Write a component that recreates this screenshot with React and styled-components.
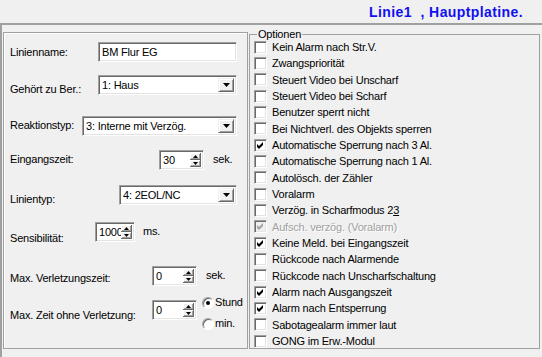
import styled, { createGlobalStyle } from "styled-components";

const GlobalStyle = createGlobalStyle`
  body {
    margin: 0;
    background: #f0f0f0;
  }
`;

const options = [
  { label: "Kein Alarm nach Str.V." },
  { label: "Zwangspriorität" },
  { label: "Steuert Video bei Unscharf" },
  { label: "Steuert Video bei Scharf" },
  { label: "Benutzer sperrt nicht" },
  { label: "Bei Nichtverl. des Objekts sperren" },
  { label: "Automatische Sperrung nach 3 Al.", checked: true },
  { label: "Automatische Sperrung nach 1 Al." },
  { label: "Autolösch. der Zähler" },
  { label: "Voralarm" },
  {
    label: (
      <>
        Verzög. in Scharfmodus 2<u>3</u>
      </>
    ),
  },
  { label: "Aufsch. verzög. (Voralarm)", checked: true, disabled: true },
  { label: "Keine Meld. bei Eingangszeit", checked: true },
  { label: "Rückcode nach Alarmende" },
  { label: "Rückcode nach Unscharfschaltung" },
  { label: "Alarm nach Ausgangszeit", checked: true },
  { label: "Alarm nach Entsperrung", checked: true },
  { label: "Sabotagealarm immer laut" },
  { label: "GONG im Erw.-Modul" },
];

const Check = ({ color }) => (
  <svg width="7" height="7" viewBox="0 0 7 7">
    <path d="M0 2 L2 4 L6 0 L6 3 L2 7 L0 5 Z" fill={color} />
  </svg>
);

const DownArrow = () => (
  <svg width="7" height="4" viewBox="0 0 7 4">
    <path d="M0 0 H7 L3.5 4 Z" fill="#000" />
  </svg>
);

const SmallArrow = ({ up }) => (
  <svg width="5" height="3" viewBox="0 0 5 3">
    <path d={up ? "M0 3 H5 L2.5 0 Z" : "M0 0 H5 L2.5 3 Z"} fill="#000" />
  </svg>
);

const Select = ({ value, width }) => (
  <Field $w={width} $h={20}>
    <Value>{value}</Value>
    <DropButton>
      <DownArrow />
    </DropButton>
  </Field>
);

const Spin = ({ value, width }) => (
  <Field $w={width} $h={20}>
    <Value>{value}</Value>
    <SpinButtons>
      <SpinHalf>
        <SmallArrow up />
      </SpinHalf>
      <SpinHalf>
        <SmallArrow />
      </SpinHalf>
    </SpinButtons>
  </Field>
);

const App = () => {
  return (
    <Window>
      <GlobalStyle />
      <Header>
        <Title>Linie1  , Hauptplatine.</Title>
      </Header>
      <Frame>
        <LeftPanel>
          <Row $mt={9}>
            <Label $w={88} $dy={4}>Linienname:</Label>
            <Field $w={139} $h={20}>
              <Value>BM Flur EG</Value>
            </Field>
          </Row>
          <Row $mt={13}>
            <Label $w={88} $dy={8}>Gehört zu Ber.:</Label>
            <Select value="1: Haus" width={139} />
          </Row>
          <Row $mt={20}>
            <Label $w={72} $dy={3}>Reaktionstyp:</Label>
            <Select value="3: Interne mit Verzög." width={155} />
          </Row>
          <Row $mt={14}>
            <Label $w={149} $dy={3}>Eingangszeit:</Label>
            <Spin value="30" width={45} />
            <Unit $gap={9}>sek.</Unit>
          </Row>
          <Row $mt={15}>
            <Label $w={109} $dy={8}>Linientyp:</Label>
            <Select value="4: 2EOL/NC" width={118} />
          </Row>
          <Row $mt={16}>
            <Label $w={85} $dy={10}>Sensibilität:</Label>
            <Spin value="1000" width={40} />
            <Unit $gap={8}>ms.</Unit>
          </Row>
          <Row $mt={21}>
            <Label $w={142} $dy={6}>Max. Verletzungszeit:</Label>
            <Spin value="0" width={45} />
            <Unit $gap={9}>sek.</Unit>
          </Row>
          <Row $mt={14}>
            <Label $w={142} $dy={9}>Max. Zeit ohne Verletzung:</Label>
            <Spin value="0" width={45} />
            <RadioGroup>
              <RadioRow>
                <Radio $on />
                <span>Stund</span>
              </RadioRow>
              <RadioRow>
                <Radio />
                <span>min.</span>
              </RadioRow>
            </RadioGroup>
          </Row>
        </LeftPanel>
        <Options>
          <Legend>Optionen</Legend>
          <CheckList>
            {options.map((o, i) => (
              <CheckRow key={i} $disabled={o.disabled}>
                <Box $disabled={o.disabled}>
                  {o.checked && <Check color={o.disabled ? "#a0a0a0" : "#000"} />}
                </Box>
                <span>{o.label}</span>
              </CheckRow>
            ))}
          </CheckList>
        </Options>
      </Frame>
    </Window>
  );
};

const Window = styled.div`
  width: 542px;
  height: 357px;
  overflow: hidden;
  background: #f0f0f0;
  font-family: "Liberation Sans", Arial, sans-serif;
  font-size: 11px;
  letter-spacing: -0.2px;
  color: #000;
`;

const Header = styled.div`
  height: 23px;
  display: flex;
  justify-content: flex-end;
  align-items: center;
  padding-right: 19px;
  box-sizing: border-box;
`;

const Title = styled.div`
  font-weight: bold;
  font-size: 14px;
  letter-spacing: 0.4px;
  color: #1010f0;
  white-space: pre;
`;

const Frame = styled.div`
  display: flex;
  align-items: flex-start;
  gap: 1px;
  height: 334px;
  box-sizing: border-box;
  border-top: 2px solid #a0a0a0;
  border-left: 2px solid #a0a0a0;
  padding: 7px 2px 0 1px;
`;

const LeftPanel = styled.div`
  width: 245px;
  height: 317px;
  box-sizing: border-box;
  border: 1px solid #a0a0a0;
  box-shadow: inset 1px 1px #fff;
  padding-left: 6px;
  overflow: hidden;
  display: flex;
  flex-direction: column;
`;

const Row = styled.div`
  display: flex;
  align-items: flex-start;
  margin-top: ${(p) => p.$mt}px;
  line-height: 13px;
  flex-shrink: 0;
`;

const Label = styled.div`
  width: ${(p) => p.$w}px;
  flex-shrink: 0;
  padding-top: ${(p) => p.$dy}px;
  white-space: nowrap;
`;

const Field = styled.div`
  width: ${(p) => p.$w}px;
  height: ${(p) => p.$h}px;
  flex-shrink: 0;
  box-sizing: border-box;
  display: flex;
  align-items: stretch;
  background: #fff;
  border-top: 1px solid #a0a0a0;
  border-left: 1px solid #a0a0a0;
  border-right: 1px solid #fff;
  border-bottom: 1px solid #fff;
  box-shadow: inset 1px 1px #696969, inset -1px -1px #e3e3e3;
  padding: 2px;
`;

const Value = styled.div`
  flex: 1;
  min-width: 0;
  overflow: hidden;
  white-space: nowrap;
  padding-left: 1px;
  line-height: 14px;
`;

const DropButton = styled.div`
  width: 16px;
  flex-shrink: 0;
  box-sizing: border-box;
  display: flex;
  align-items: center;
  justify-content: center;
  background: #f0f0f0;
  border-top: 1px solid #f0f0f0;
  border-left: 1px solid #f0f0f0;
  border-right: 1px solid #696969;
  border-bottom: 1px solid #696969;
  box-shadow: inset 1px 1px #fff, inset -1px -1px #a0a0a0;
`;

const SpinButtons = styled.div`
  width: 11px;
  flex-shrink: 0;
  display: flex;
  flex-direction: column;
`;

const SpinHalf = styled.div`
  flex: 1;
  box-sizing: border-box;
  display: flex;
  align-items: center;
  justify-content: center;
  background: #f0f0f0;
  border-right: 1px solid #696969;
  border-bottom: 1px solid #696969;
  box-shadow: inset 1px 1px #fff, inset -1px -1px #a0a0a0;
`;

const Unit = styled.div`
  margin-left: ${(p) => p.$gap}px;
  padding-top: 3px;
`;

const RadioGroup = styled.div`
  margin-left: 5px;
  margin-top: -4px;
  display: flex;
  flex-direction: column;
  gap: 8px;
`;

const RadioRow = styled.div`
  display: flex;
  align-items: center;
  gap: 1px;
  height: 13px;
  white-space: nowrap;
`;

const Radio = styled.span`
  width: 12px;
  height: 12px;
  box-sizing: border-box;
  border-radius: 50%;
  background: #fff;
  border: 1px solid;
  border-color: #a0a0a0 #fff #fff #a0a0a0;
  box-shadow: inset 1px 1px #696969;
  display: flex;
  align-items: center;
  justify-content: center;
  &::after {
    content: "";
    display: ${(p) => (p.$on ? "block" : "none")};
    width: 4px;
    height: 4px;
    border-radius: 50%;
    background: #000;
  }
`;

const Options = styled.fieldset`
  flex: 1;
  min-width: 0;
  margin: -4px 0 0 0;
  height: 321px;
  box-sizing: border-box;
  border: 1px solid #a0a0a0;
  padding: 0 0 0 4px;
`;

const Legend = styled.legend`
  padding: 0 1px;
  margin-left: 3px;
  line-height: 13px;
`;

const CheckList = styled.div`
  margin-top: -2px;
  display: flex;
  flex-direction: column;
`;

const CheckRow = styled.div`
  height: 16.33px;
  display: flex;
  align-items: center;
  gap: 5px;
  white-space: nowrap;
  color: ${(p) => (p.$disabled ? "#a0a0a0" : "#000")};
  text-shadow: ${(p) => (p.$disabled ? "1px 1px #fff" : "none")};
`;

const Box = styled.span`
  width: 13px;
  height: 13px;
  flex-shrink: 0;
  box-sizing: border-box;
  display: flex;
  align-items: center;
  justify-content: center;
  background: ${(p) => (p.$disabled ? "#f0f0f0" : "#fff")};
  border-top: 1px solid #a0a0a0;
  border-left: 1px solid #a0a0a0;
  border-right: 1px solid #fff;
  border-bottom: 1px solid #fff;
  box-shadow: inset 1px 1px #696969, inset -1px -1px #e3e3e3;
`;

export default App;
